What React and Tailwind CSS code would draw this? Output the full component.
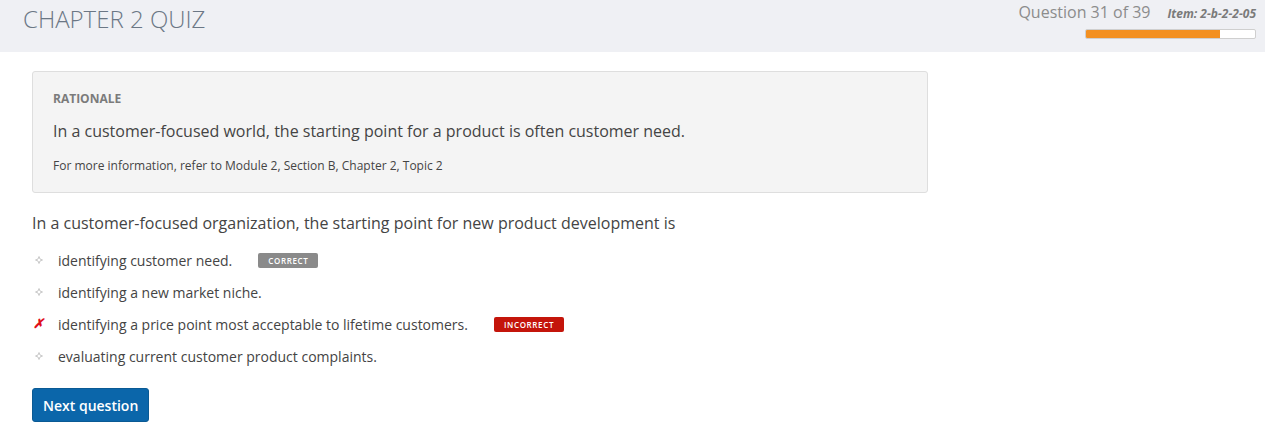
import React from "react";

const options = [
  { text: "identifying customer need.", status: "correct" },
  { text: "identifying a new market niche." },
  { text: "identifying a price point most acceptable to lifetime customers.", status: "incorrect", chosen: true },
  { text: "evaluating current customer product complaints." },
];

// Small four-point bullet used in front of answer options
const Bullet = () => (
  <svg width="8" height="8" viewBox="0 0 8 8" className="shrink-0">
    <path d="M4 0.5 L5 3 L7.5 4 L5 5 L4 7.5 L3 5 L0.5 4 L3 3 Z" fill="none" stroke="#c8c8c8" strokeWidth="1" />
  </svg>
);

const App = () => {
  const current = 31;
  const total = 39;

  return (
    <div className="min-h-[440px] bg-white font-['Open_Sans',sans-serif] text-[#444]">
      {/* Header */}
      <div className="flex h-[52px] justify-between bg-[#eff0f4] pl-[23px] pr-[9px]">
        <h1 className="pt-[2px] text-[24px] font-light leading-[34px] text-[#6b7785]">CHAPTER 2 QUIZ</h1>
        <div className="flex flex-col items-end">
          <div className="flex items-baseline gap-[17px]">
            <span className="text-[16px] leading-[24px] text-[#8c8c8c]">
              Question {current} of {total}
            </span>
            <span className="text-[12px] font-bold italic text-[#7a7a7a]">Item: 2-b-2-2-05</span>
          </div>
          <div className="mt-[5px] h-[10px] w-[171px] overflow-hidden rounded-[2px] border border-[#cfcfcf] bg-white">
            <div className="h-full bg-[#f39021]" style={{ width: `${(current / total) * 100}%` }} />
          </div>
        </div>
      </div>

      <div className="px-8 pt-[19px]">
        {/* Rationale */}
        <div className="w-[896px] rounded-[3px] border border-[#dedede] bg-[#f4f4f4] px-5 pb-[17px] pt-[18px]">
          <div className="text-[12px] font-bold leading-[18px] text-[#7b7b7b]">RATIONALE</div>
          <p className="mt-[12px] text-[16px] leading-[22px] text-[#444]">
            In a customer-focused world, the starting point for a product is often customer need.
          </p>
          <p className="mt-[15px] text-[12px] leading-[18px] text-[#444]">
            For more information, refer to Module 2, Section B, Chapter 2, Topic 2
          </p>
        </div>

        {/* Question */}
        <p className="mt-[18px] text-[16px] leading-[24px] text-[#444]">
          In a customer-focused organization, the starting point for new product development is
        </p>

        <ul className="mt-[9px] flex flex-col">
          {options.map((opt) => (
            <li key={opt.text} className="flex h-[32px] items-center text-[14px] text-[#444]">
              <span className="flex w-[26px] justify-start pl-[1px]">
                {opt.chosen ? (
                  <span className="text-[13px] font-bold italic text-[#e0101a]">✗</span>
                ) : (
                  <span className="pl-[2px]"><Bullet /></span>
                )}
              </span>
              <span>{opt.text}</span>
              {opt.status === "correct" && (
                <span className="ml-[26px] rounded-[2px] bg-[#8a8a8a] px-[10px] text-[8px] font-semibold leading-[15px] tracking-[0.08em] text-white">
                  CORRECT
                </span>
              )}
              {opt.status === "incorrect" && (
                <span className="ml-[26px] rounded-[2px] bg-[#c4150b] px-[10px] text-[8px] font-semibold leading-[15px] tracking-[0.08em] text-white">
                  INCORRECT
                </span>
              )}
            </li>
          ))}
        </ul>

        <button className="mt-[16px] h-[34px] rounded-[3px] border border-[#0a5a94] bg-[#0b66aa] px-[10px] text-[14px] font-semibold text-white">
          Next question
        </button>
      </div>
    </div>
  );
};

export default App;
